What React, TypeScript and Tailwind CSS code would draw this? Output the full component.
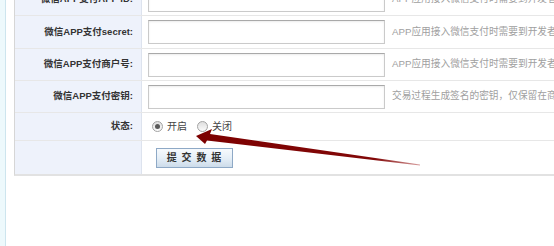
import React from "react";

type Row = { label: string; hint: string; h: string };

const rows: Row[] = [
  { label: "微信APP支付APP ID:", hint: "APP应用接入微信支付时需要到开发者平台申请", h: "h-[32px]" },
  { label: "微信APP支付secret:", hint: "APP应用接入微信支付时需要到开发者平台申请", h: "h-[33px]" },
  { label: "微信APP支付商户号:", hint: "APP应用接入微信支付时需要到开发者平台申请", h: "h-[32px]" },
  { label: "微信APP支付密钥:", hint: "交易过程生成签名的密钥，仅保留在商户系统和微信后台", h: "h-[32px]" },
];

function Label({ children }: { children?: React.ReactNode }) {
  return (
    <div className="flex w-[127px] shrink-0 items-center justify-end border-r border-[#dde3ee] bg-[#eef2fb] pr-[8px] text-[9.5px] font-bold text-[#333]">
      {children}
    </div>
  );
}

function Radio({ checked, label }: { checked?: boolean; label: string }) {
  return (
    <label className="flex items-center gap-[4px] text-[10px] text-[#444]">
      <span className="flex h-[11px] w-[11px] items-center justify-center rounded-full border border-[#a3a3a3] bg-gradient-to-b from-[#dedede] to-[#fbfbfb]">
        {checked && <span className="h-[5px] w-[5px] rounded-full bg-[#5a5a5a]" />}
      </span>
      {label}
    </label>
  );
}

export default function App() {
  return (
    <div className="relative flex h-[246px] w-[554px] overflow-hidden bg-white font-['Liberation_Sans','Noto_Sans_CJK_SC',sans-serif]">
      <div className="w-[6px] shrink-0 border-r border-[#cde5ee] bg-[#edf9fc]" />

      <div className="min-w-0 flex-1 pl-[8px]">
        <div className="-mt-[16px] border-b-2 border-l border-b-[#e2e2e2] border-l-[#d6d6d6]">
          {rows.map((r) => (
            <div key={r.label} className={`flex border-b border-[#e7e7e7] ${r.h}`}>
              <Label>{r.label}</Label>
              <div className="flex items-center gap-[7px] whitespace-nowrap pl-[6px]">
                <input
                  type="text"
                  className="h-[24px] w-[237px] shrink-0 border border-[#cacaca] border-t-[#a9a9a9] bg-white shadow-[inset_0_1px_2px_rgba(0,0,0,0.08)] outline-none"
                />
                <span className="text-[9.7px] text-[#a0a0a0]">{r.hint}</span>
              </div>
            </div>
          ))}

          <div className="flex h-[28px] border-b border-[#e7e7e7]">
            <Label>状态:</Label>
            <div className="flex items-center gap-[10px] pl-[10px]">
              <Radio checked label="开启" />
              <Radio label="关闭" />
            </div>
          </div>

          <div className="flex h-[33px]">
            <Label />
            <div className="flex items-center pl-[14px]">
              <button className="h-[20px] w-[77px] border border-[#8ea9c6] bg-gradient-to-b from-[#f7fafd] via-[#e6eff7] to-[#cddcea] text-[10px] font-bold tracking-[1px] text-[#333]">
                提 交 数 据
              </button>
            </div>
          </div>
        </div>
      </div>

      <svg
        className="pointer-events-none absolute inset-0"
        width="554"
        height="246"
        viewBox="0 0 554 246"
      >
        <defs>
          <linearGradient id="shaft" x1="196" y1="0" x2="420" y2="0" gradientUnits="userSpaceOnUse">
            <stop offset="0" stopColor="#7c0000" />
            <stop offset="0.8" stopColor="#820808" />
            <stop offset="1" stopColor="#d9a0a0" />
          </linearGradient>
        </defs>
        <polygon
          points="196,136 212,129 210,134 420,164.4 420,165.4 207,140.5 205,144"
          fill="url(#shaft)"
        />
      </svg>
    </div>
  );
}
